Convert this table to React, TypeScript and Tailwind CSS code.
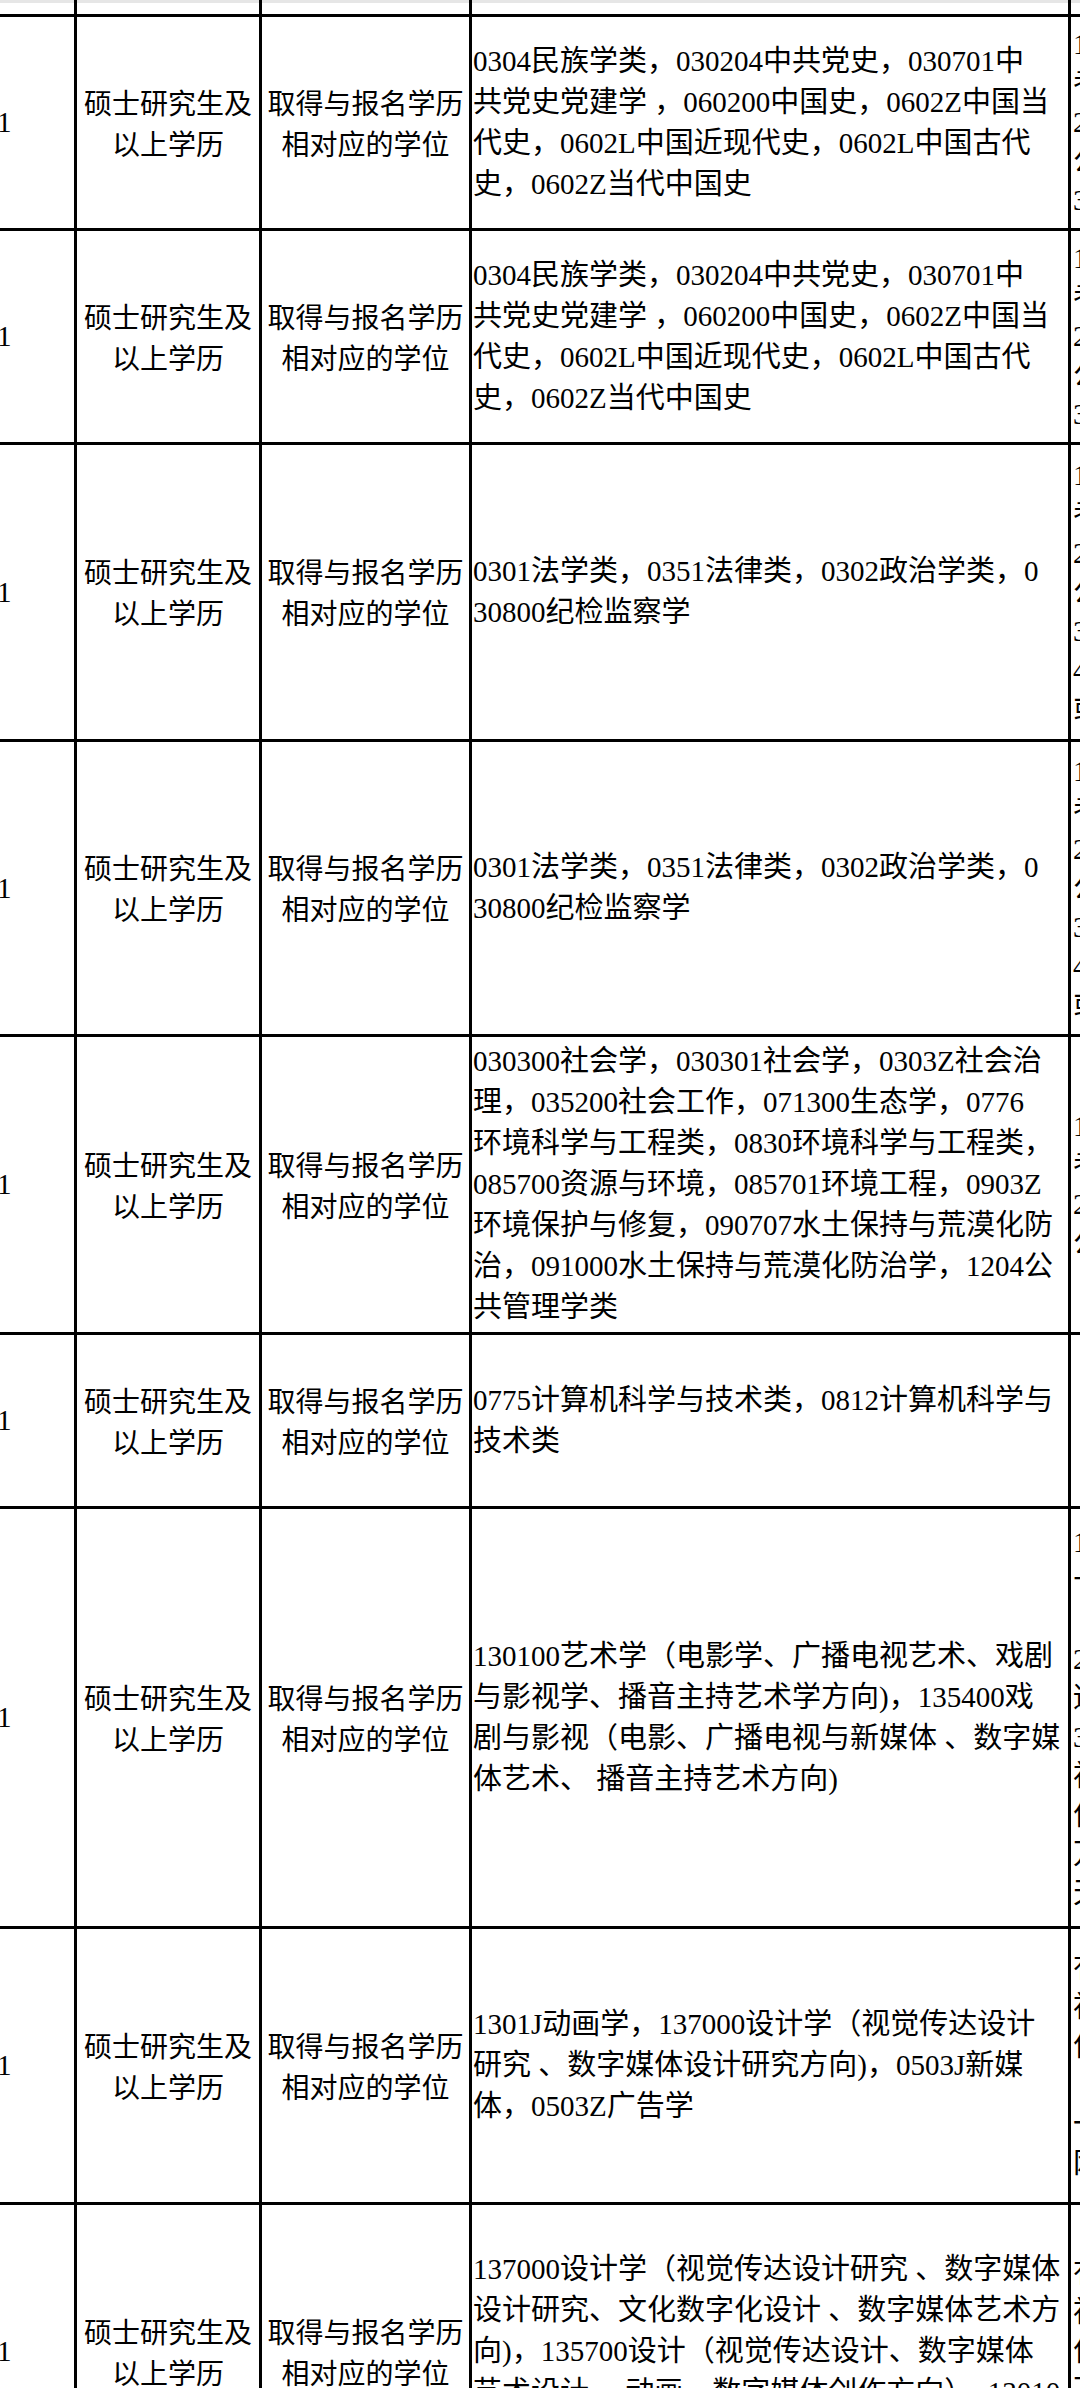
import React from "react";

type RowData = {
  hc: string;
  c4: string[];
  c5: string[];
};

const SERIF = "font-['Liberation_Serif','Noto_Sans_CJK_SC',serif]";

const rows: RowData[] = [
  {
    hc: "h-[214px]",
    c4: [
      "0304民族学类，030204中共党史，030701中",
      "共党史党建学 ，060200中国史，0602Z中国当",
      "代史，0602L中国近现代史，0602L中国古代",
      "史，0602Z当代中国史",
    ],
    c5: ["1", "考", "2", "公", "3"],
  },
  {
    hc: "h-[214px]",
    c4: [
      "0304民族学类，030204中共党史，030701中",
      "共党史党建学 ，060200中国史，0602Z中国当",
      "代史，0602L中国近现代史，0602L中国古代",
      "史，0602Z当代中国史",
    ],
    c5: ["1", "考", "2", "公", "3"],
  },
  {
    hc: "h-[297px]",
    c4: ["0301法学类，0351法律类，0302政治学类，0", "30800纪检监察学"],
    c5: ["1", "考", "2", "公", "3", "4", "或"],
  },
  {
    hc: "h-[295px]",
    c4: ["0301法学类，0351法律类，0302政治学类，0", "30800纪检监察学"],
    c5: ["1", "考", "2", "公", "3", "4", "或"],
  },
  {
    hc: "h-[298px]",
    c4: [
      "030300社会学，030301社会学，0303Z社会治",
      "理，035200社会工作，071300生态学，0776",
      "环境科学与工程类，0830环境科学与工程类，",
      "085700资源与环境，085701环境工程，0903Z",
      "环境保护与修复，090707水土保持与荒漠化防",
      "治，091000水土保持与荒漠化防治学，1204公",
      "共管理学类",
    ],
    c5: ["1", "考", "2", "公"],
  },
  {
    hc: "h-[174px]",
    c4: ["0775计算机科学与技术类，0812计算机科学与", "技术类"],
    c5: [],
  },
  {
    hc: "h-[420px]",
    c4: [
      "130100艺术学（电影学、广播电视艺术、戏剧",
      "与影视学、播音主持艺术学方向)，135400戏",
      "剧与影视（电影、广播电视与新媒体 、数字媒",
      "体艺术、 播音主持艺术方向)",
    ],
    c5: ["1", "十", "\u00a0", "2", "适", "3", "初", "作", "万", "天"],
  },
  {
    hc: "h-[276px]",
    c4: [
      "1301J动画学，137000设计学（视觉传达设计",
      "研究 、数字媒体设计研究方向)，0503J新媒",
      "体，0503Z广告学",
    ],
    c5: ["有", "初", "作", "\u00a0", "一", "网"],
  },
  {
    hc: "h-[296px]",
    c4: [
      "137000设计学（视觉传达设计研究 、数字媒体",
      "设计研究、文化数字化设计 、数字媒体艺术方",
      "向)，135700设计（视觉传达设计、数字媒体",
      "艺术设计 、动画、数字媒体创作方向），13010",
      "0艺术学（设计学方向）",
    ],
    c5: ["有", "初", "作", "万", "天"],
  },
];

function Row({ hc, c4, c5 }: RowData) {
  return (
    <div className={`flex ${hc} border-b-[3px] border-black`}>
      <div className={`w-[77px] shrink-0 border-r-[3px] border-black flex items-center overflow-hidden ${SERIF} text-[29px] leading-[41px]`}>
        <span className="-ml-[3px]">1</span>
      </div>
      <div className="w-[185px] shrink-0 border-r-[3px] border-black flex items-center justify-center text-center font-['Noto_Sans_CJK_SC',sans-serif] text-[28px] leading-[41px] whitespace-nowrap">
        <div>
          硕士研究生及
          <br />
          以上学历
        </div>
      </div>
      <div className="w-[210px] shrink-0 border-r-[3px] border-black flex items-center justify-center text-center font-['Noto_Sans_CJK_SC',sans-serif] text-[28px] leading-[41px] whitespace-nowrap">
        <div>
          取得与报名学历
          <br />
          相对应的学位
        </div>
      </div>
      <div className={`w-[599px] shrink-0 border-r-[3px] border-black flex items-center pl-[1px] overflow-hidden whitespace-pre ${SERIF} text-[29px] leading-[41px]`}>
        <div>
          {c4.map((l, i) => (
            <div key={i}>{l}</div>
          ))}
        </div>
      </div>
      <div className={`flex-1 min-w-0 flex items-center pl-[2px] overflow-hidden whitespace-nowrap ${SERIF} text-[29px] leading-[39px]`}>
        <div>
          {c5.map((l, i) => (
            <div key={i}>{l}</div>
          ))}
        </div>
      </div>
    </div>
  );
}

export default function App() {
  return (
    <div className="w-[1080px] h-[2388px] overflow-hidden bg-white text-black">
      <div className="flex h-[17px] border-b-[3px] border-black">
        <div className="w-[77px] shrink-0 border-r-[3px] border-black">
          <div className="h-[3px] bg-[#e6e6e6]" />
        </div>
        <div className="w-[185px] shrink-0 border-r-[3px] border-black">
          <div className="h-[3px] bg-[#e6e6e6]" />
        </div>
        <div className="w-[210px] shrink-0 border-r-[3px] border-black">
          <div className="h-[3px] bg-[#e6e6e6]" />
        </div>
        <div className="w-[599px] shrink-0 border-r-[3px] border-black">
          <div className="h-[3px] bg-[#e6e6e6]" />
        </div>
        <div className="flex-1">
          <div className="h-[3px] bg-[#e6e6e6]" />
        </div>
      </div>
      {rows.map((r, i) => (
        <Row key={i} {...r} />
      ))}
    </div>
  );
}
